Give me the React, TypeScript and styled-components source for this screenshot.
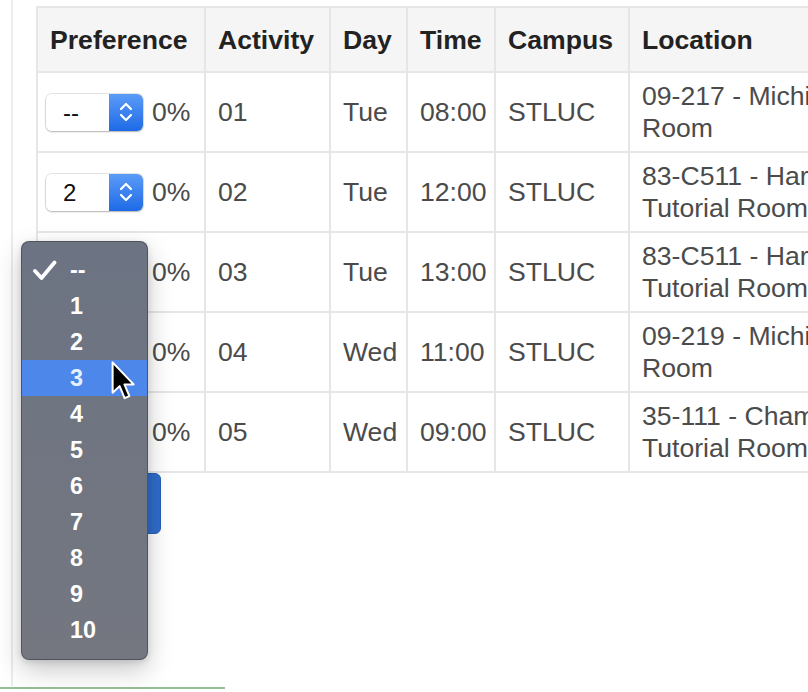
import React from "react";
import styled, { createGlobalStyle } from "styled-components";

const GlobalStyle = createGlobalStyle`
  html, body {
    margin: 0;
    padding: 0;
    background: #ffffff;
    overflow: hidden;
  }
  body {
    font-family: "Liberation Sans", Helvetica, Arial, sans-serif;
  }
`;

type Row = {
  pref: string;
  activity: string;
  day: string;
  time: string;
  campus: string;
  location: [string, string];
};

const rows: Row[] = [
  { pref: "--", activity: "01", day: "Tue", time: "08:00", campus: "STLUC", location: ["09-217 - Michie Seminar", "Room"] },
  { pref: "2", activity: "02", day: "Tue", time: "12:00", campus: "STLUC", location: ["83-C511 - Hartley Teakle", "Tutorial Room"] },
  { pref: "--", activity: "03", day: "Tue", time: "13:00", campus: "STLUC", location: ["83-C511 - Hartley Teakle", "Tutorial Room"] },
  { pref: "--", activity: "04", day: "Wed", time: "11:00", campus: "STLUC", location: ["09-219 - Michie Seminar", "Room"] },
  { pref: "--", activity: "05", day: "Wed", time: "09:00", campus: "STLUC", location: ["35-111 - Chamberlain", "Tutorial Room"] },
];

const options = ["--", "1", "2", "3", "4", "5", "6", "7", "8", "9", "10"];

const Page = styled.div`
  position: relative;
  width: 808px;
  height: 692px;
  display: flex;
  flex-direction: column;
`;

const Main = styled.div`
  display: flex;
  height: 686px;
`;

const Rail = styled.div`
  width: 11px;
  flex: none;
  border-right: 2px solid #ececec;
`;

const Content = styled.div`
  flex: none;
  padding: 6px 0 0 23px;
  display: flex;
  flex-direction: column;
  align-items: flex-start;
`;

const FooterLine = styled.div`
  width: 225px;
  height: 2px;
  margin-top: 1px;
  background: #93c197;
`;

const Table = styled.table`
  border-collapse: collapse;
  table-layout: fixed;
  width: 972px;
  font-size: 26.6px;
  line-height: 32px;
`;

const HeadCell = styled.th`
  background: #f5f5f5;
  border: 2px solid #e6e6e6;
  padding: 15.5px 12px;
  text-align: left;
  font-weight: 700;
  color: #222222;
  white-space: nowrap;
`;

const Cell = styled.td<{ $pref?: boolean }>`
  border: 2px solid #e6e6e6;
  padding: ${(p) => (p.$pref ? "7px 6px 7px 8px" : "7px 12px")};
  color: #4b4b4b;
  vertical-align: middle;
  white-space: nowrap;
`;

const LocationLine = styled.span`
  display: block;
`;

const PrefWrap = styled.div`
  display: flex;
  align-items: center;
  gap: 9px;
`;

const Select = styled.div`
  width: 97px;
  height: 37px;
  display: flex;
  border-radius: 6px;
  overflow: hidden;
  box-shadow: 0 0 0 1px rgba(0, 0, 0, 0.1), 0 1px 2px rgba(0, 0, 0, 0.22);
  flex: none;
`;

const SelectValue = styled.div`
  flex: 1;
  background: #ffffff;
  padding-left: 17px;
  font-size: 24px;
  line-height: 37px;
  color: #111111;
`;

const Stepper = styled.div`
  width: 34px;
  background: linear-gradient(#5b9bf8, #1e6ae6);
  display: flex;
  align-items: center;
  justify-content: center;
`;

const Percent = styled.span`
  color: #4b4b4b;
`;

const SaveButton = styled.div`
  margin: 0;
  width: 125px;
  height: 61px;
  border-radius: 6px;
  background: #2f6dcb;
  border: 1px solid #285fb3;
  box-sizing: border-box;
`;

const Menu = styled.div`
  position: absolute;
  left: 21px;
  top: 241px;
  width: 127px;
  height: 419px;
  box-sizing: border-box;
  padding: 10px 0;
  border-radius: 8px;
  background: linear-gradient(#6c7382, #747780);
  border: 1px solid rgba(60, 62, 70, 0.6);
  box-shadow: 0 10px 26px rgba(0, 0, 0, 0.22), 0 2px 6px rgba(0, 0, 0, 0.12);
  display: flex;
  flex-direction: column;
`;

const MenuItem = styled.div<{ $active?: boolean }>`
  position: relative;
  height: 36.2px;
  display: flex;
  align-items: center;
  padding-left: 48px;
  font-size: 23.4px;
  font-weight: 700;
  color: ${(p) => (p.$active ? "#e4f1ff" : "#ffffff")};
  background: ${(p) => (p.$active ? "#4e87ea" : "transparent")};
`;

const Check = styled.svg`
  position: absolute;
  left: 11px;
  top: 8px;
`;

const Cursor = styled.svg`
  position: absolute;
  left: 110px;
  top: 360px;
`;

function StepperIcon() {
  return (
    <svg width="14" height="24" viewBox="0 0 14 24" fill="none">
      <path d="M2 9 L7 4 L12 9" stroke="#ffffff" strokeWidth="2.2" strokeLinecap="round" strokeLinejoin="round" />
      <path d="M2 15 L7 20 L12 15" stroke="#ffffff" strokeWidth="2.2" strokeLinecap="round" strokeLinejoin="round" />
    </svg>
  );
}

function PrefSelect({ value }: { value: string }) {
  return (
    <Select>
      <SelectValue>{value}</SelectValue>
      <Stepper>
        <StepperIcon />
      </Stepper>
    </Select>
  );
}

export default function App() {
  return (
    <Page>
      <GlobalStyle />
      <Main>
        <Rail />
        <Content>
          <Table>
            <colgroup>
              <col style={{ width: 168 }} />
              <col style={{ width: 125 }} />
              <col style={{ width: 77 }} />
              <col style={{ width: 88 }} />
              <col style={{ width: 134 }} />
              <col style={{ width: 380 }} />
            </colgroup>
            <thead>
              <tr>
                <HeadCell>Preference</HeadCell>
                <HeadCell>Activity</HeadCell>
                <HeadCell>Day</HeadCell>
                <HeadCell>Time</HeadCell>
                <HeadCell>Campus</HeadCell>
                <HeadCell>Location</HeadCell>
              </tr>
            </thead>
            <tbody>
              {rows.map((r) => (
                <tr key={r.activity}>
                  <Cell $pref>
                    <PrefWrap>
                      <PrefSelect value={r.pref} />
                      <Percent>0%</Percent>
                    </PrefWrap>
                  </Cell>
                  <Cell>{r.activity}</Cell>
                  <Cell>{r.day}</Cell>
                  <Cell>{r.time}</Cell>
                  <Cell>{r.campus}</Cell>
                  <Cell>
                    <LocationLine>{r.location[0]}</LocationLine>
                    <LocationLine>{r.location[1]}</LocationLine>
                  </Cell>
                </tr>
              ))}
            </tbody>
          </Table>
          <SaveButton />
        </Content>
      </Main>
      <FooterLine />

      <Menu>
        {options.map((o) => (
          <MenuItem key={o} $active={o === "3"}>
            {o === "--" && (
              <Check width="24" height="21" viewBox="0 0 24 21" fill="none">
                <path d="M2 11 L8.5 18 L21.5 2.5" stroke="#ffffff" strokeWidth="3.8" strokeLinecap="round" strokeLinejoin="round" />
              </Check>
            )}
            {o}
          </MenuItem>
        ))}
      </Menu>

      <Cursor width="27" height="42" viewBox="0 0 17 27">
        <path
          d="M1.5 1.5 L1.5 21 L6 16.8 L9.2 24.5 L12.3 23.2 L9.1 15.7 L15 15.7 Z"
          fill="#000000"
          stroke="#ffffff"
          strokeWidth="1.3"
          strokeLinejoin="round"
        />
      </Cursor>
    </Page>
  );
}
